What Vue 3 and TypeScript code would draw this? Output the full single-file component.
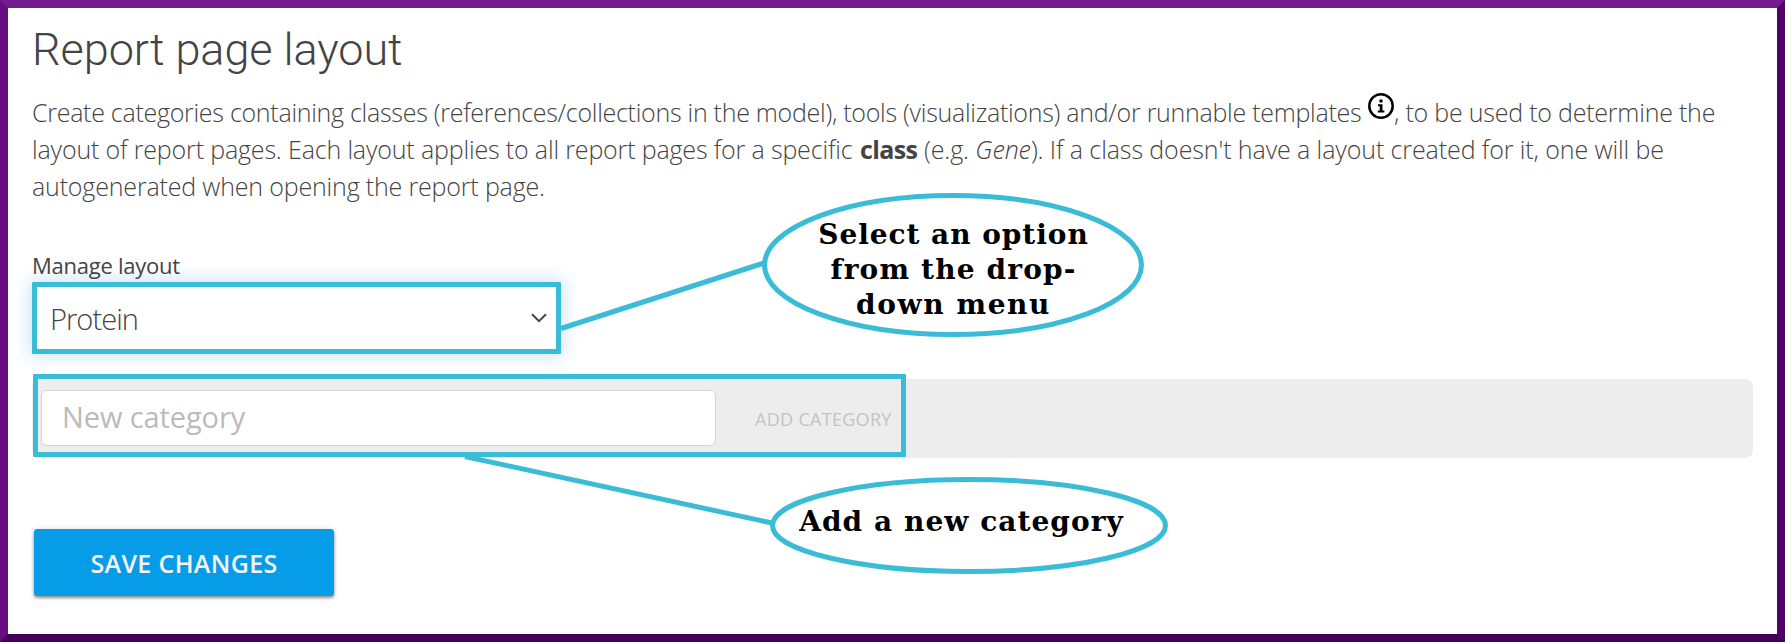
<script setup lang="ts">
import { ref } from 'vue'

const selected = ref('Protein')
const category = ref('')
</script>

<template>
  <main class="page">
    <h1 class="title">Report page layout</h1>

    <div class="intro">
      <div class="line">
        <span class="seg a">Create categories containing classes (references/collections in the model), tools (visualizations) and/or runnable templates</span>
        <svg class="info" viewBox="0 0 26 26" aria-hidden="true">
          <circle cx="13" cy="13" r="11.7" fill="none" stroke="#000" stroke-width="2.5" />
          <circle cx="13" cy="8" r="1.8" />
          <path d="M10 11.3h4.5v6.3h1.9v2H9.8v-2h1.9v-4.3H10z" />
        </svg>
        <span class="seg b">, to be used to determine the</span>
      </div>
      <div class="line">
        <span class="seg c">layout of report pages. Each layout applies to all report pages for a specific</span>
        <strong>class</strong>
        <span class="seg d">(e.g. <em>Gene</em>). If a class doesn't have a layout created for it, one will be</span>
      </div>
      <div class="line">
        <span class="seg e">autogenerated when opening the report page.</span>
      </div>
    </div>

    <label class="label">Manage layout</label>
    <div class="select">
      <span>{{ selected }}</span>
      <svg class="chevron" viewBox="0 0 16 10" aria-hidden="true">
        <path d="M1 1.2l7 7 7-7" fill="none" stroke="#444" stroke-width="2" />
      </svg>
    </div>

    <section class="panel">
      <div class="marked">
        <input v-model="category" class="field" placeholder="New category" />
        <span class="add">ADD CATEGORY</span>
      </div>
    </section>

    <button class="save">SAVE CHANGES</button>

    <svg class="links" viewBox="0 0 1785 642" aria-hidden="true">
      <path d="M561 328.5L764 263M465 456.5L772 523" />
      <ellipse cx="953" cy="265" rx="188.5" ry="69.5" />
      <ellipse cx="969" cy="525.5" rx="196.5" ry="46" />
    </svg>
    <div class="bubble first"><span>Select an option</span><span class="l2">from the drop-</span><span class="l3">down menu</span></div>
    <div class="bubble second"><span>Add a new category</span></div>
  </main>
</template>

<style>
body {
  margin: 0;
}
</style>

<style scoped>
.page {
  position: relative;
  box-sizing: border-box;
  width: 1785px;
  height: 642px;
  padding: 17px 24px 0;
  overflow: hidden;
  border: 8px solid;
  border-color: #731b8c #500066 #430059 #660d80;
  background: #fff;
  color: #444;
  font-family: "Open Sans", "Noto Sans", sans-serif;
}
.title {
  margin: 0;
  font: 300 45px/50px Roboto, sans-serif;
  letter-spacing: -0.05px;
}
.intro {
  margin-top: 19px;
  font-size: 25px;
  font-weight: 300;
}
.line {
  display: flex;
  height: 37px;
  line-height: 37px;
  white-space: nowrap;
}
.a { letter-spacing: -0.28px; width: 1336px; }
.b { letter-spacing: -0.22px; }
.c { letter-spacing: -0.16px; width: 828px; }
.d { letter-spacing: -0.1px; }
.e { letter-spacing: -0.17px; }
.line strong {
  width: 64px;
  letter-spacing: -0.6px;
  font-weight: 700;
}
.info {
  flex: none;
  width: 26px;
  height: 26px;
  margin: -1px 0 0;
}
.label {
  display: block;
  margin-top: 44px;
  height: 33px;
  font-size: 22px;
  line-height: 33px;
  letter-spacing: -0.25px;
}
.select {
  display: flex;
  align-items: center;
  justify-content: space-between;
  box-sizing: border-box;
  width: 529px;
  height: 72px;
  padding: 0 9px 0 13px;
  border: 5px solid #3bbcd6;
  border-radius: 1px;
  background: #fff;
  box-shadow: 0 0 18px 3px #cfe5f9;
  font-size: 29px;
  font-weight: 300;
  letter-spacing: -0.95px;
}
.chevron {
  width: 16px;
  height: 10px;
}
.panel {
  height: 79px;
  width: 1721px;
  margin-top: 25px;
  border-radius: 8px;
  background: #ededed;
}
.marked {
  position: relative;
  top: -5px;
  left: 1px;
  display: flex;
  align-items: center;
  box-sizing: border-box;
  width: 873px;
  height: 83px;
  padding: 4px 0 0 3px;
  border: 5px solid #3bbcd6;
  border-radius: 1px;
}
.field {
  box-sizing: border-box;
  width: 675px;
  height: 56px;
  padding: 0 20px 3px;
  border: 1px solid #d4d4d4;
  border-radius: 6px;
  background: #fff;
  font: 400 29px "Open Sans", "Noto Sans", sans-serif;
  letter-spacing: -0.1px;
}
.field::placeholder {
  color: #bbb;
  opacity: 1;
}
.add {
  margin-left: 39px;
  padding-top: 2px;
  color: #c3c3c3;
  font-size: 18px;
  letter-spacing: 0.3px;
}
.save {
  display: block;
  width: 300px;
  height: 67px;
  margin: 71px 0 0 2px;
  padding: 0;
  border: 0;
  border-radius: 3px;
  background: #069ce8;
  color: #f5f5f5;
  box-shadow: 0 2px 3px rgba(0, 0, 0, 0.4), 0 0 6px rgba(0, 0, 0, 0.12);
  font: 600 25px "Open Sans", "Noto Sans", sans-serif;
  letter-spacing: 0.35px;
}
.links {
  position: absolute;
  top: -8px;
  left: -8px;
  width: 1785px;
  height: 642px;
  fill: none;
  stroke: #3bbcd6;
  stroke-width: 5;
  pointer-events: none;
}
.links ellipse {
  fill: #fff;
}
.bubble {
  position: absolute;
  display: flex;
  flex-direction: column;
  align-items: center;
  justify-content: center;
  box-sizing: border-box;
  color: #000;
  font: 700 28px/35px "DejaVu Serif", serif;
  letter-spacing: 0.95px;
  white-space: nowrap;
}
.l2 {
  letter-spacing: 1.15px;
}
.l3 {
  letter-spacing: 1.6px;
}
.first {
  left: 754px;
  top: 185px;
  width: 382px;
  height: 144px;
  padding: 8px 0 0 1px;
}
.second {
  left: 762px;
  top: 469px;
  width: 398px;
  height: 97px;
  padding: 0 15px 8px 0;
  letter-spacing: 1.05px;
}
</style>
